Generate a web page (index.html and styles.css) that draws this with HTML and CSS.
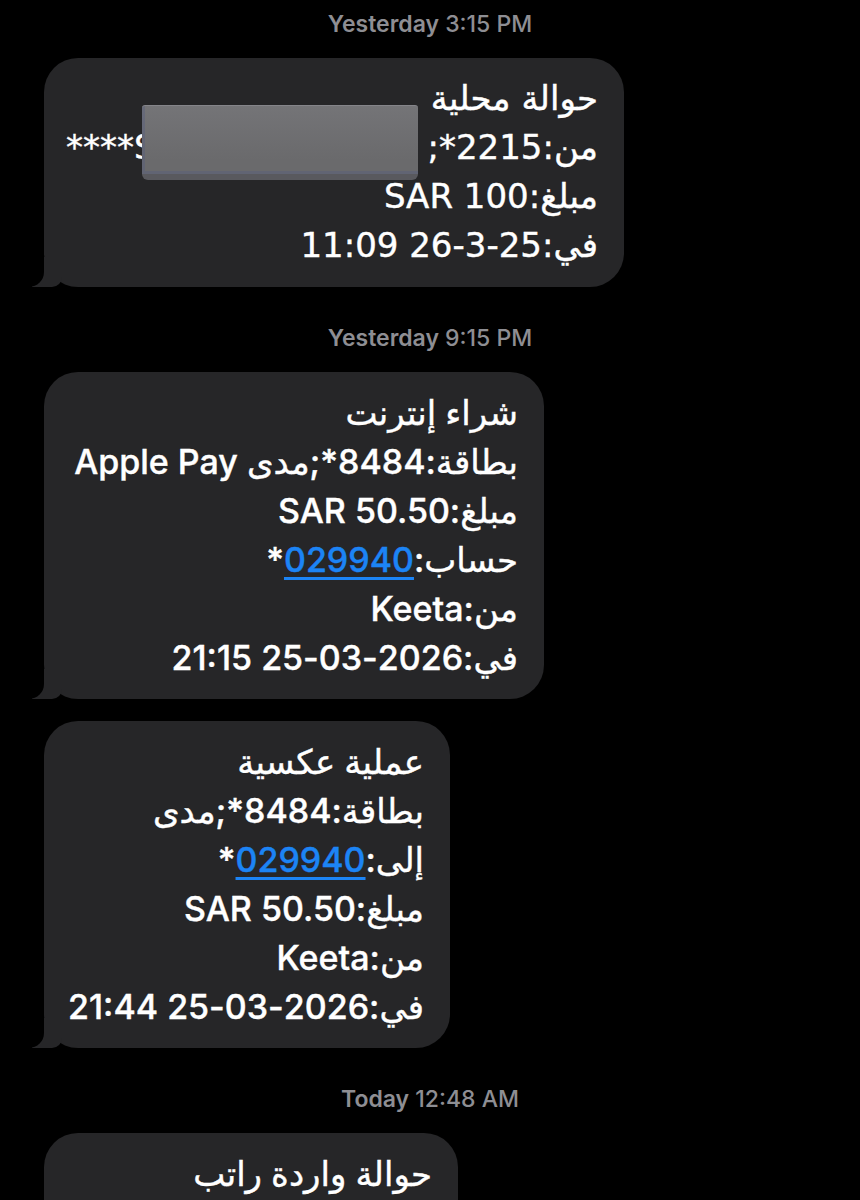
FILE: index.html
```html
<!DOCTYPE html>
<html lang="ar">
<head>
    <meta charset="UTF-8">
    <meta name="viewport" content="width=device-width, initial-scale=1.0">
    <title>Messages</title>
    <link rel="stylesheet" href="styles.css">
</head>
<body>
    <main class="thread">
        <div class="stamp" dir="ltr"><b>Yesterday</b> 3:15 PM</div>

        <!-- first sms: local transfer, sender name hidden -->
        <div class="bubble bubble-local" dir="rtl">
            <div class="line">حوالة محلية</div>
            <div class="line line-split">
                <span>من:2215*; U</span>
                <span>S****</span>
            </div>
            <div class="line">مبلغ:SAR 100</div>
            <div class="line">في:25-3-26 11:09</div>
            <div class="redact"></div>
        </div>

        <div class="stamp" dir="ltr"><b>Yesterday</b> 9:15 PM</div>

        <div class="bubble bubble-purchase" dir="rtl">
            <div class="line">شراء إنترنت</div>
            <div class="line">بطاقة:8484*;مدى Apple Pay</div>
            <div class="line">مبلغ:SAR 50.50</div>
            <div class="line">حساب:<a href="#">029940</a>*</div>
            <div class="line">من:Keeta</div>
            <div class="line">في:2026-03-25 21:15</div>
        </div>

        <div class="bubble bubble-refund" dir="rtl">
            <div class="line">عملية عكسية</div>
            <div class="line">بطاقة:8484*;مدى</div>
            <div class="line">إلى:<a href="#">029940</a>*</div>
            <div class="line">مبلغ:SAR 50.50</div>
            <div class="line">من:Keeta</div>
            <div class="line">في:2026-03-25 21:44</div>
        </div>

        <div class="stamp" dir="ltr"><b>Today</b> 12:48 AM</div>

        <div class="bubble bubble-salary" dir="rtl">
            <div class="line">حوالة واردة راتب</div>
            <div class="line">عبر:SARIE</div>
            <div class="line">مبلغ:SAR 8,500</div>
            <div class="line">في:2026-03-26 00:48</div>
        </div>
    </main>
</body>
</html>
```

FILE: styles.css
```css
body {
    margin: 0;
    background-color: #000;
    font-family: Inter, "DejaVu Sans", sans-serif;
    overflow: hidden;
}

.thread {
    display: flex;
    flex-direction: column;
    align-items: flex-start;
    padding: 10px 0 40px;
}

.stamp {
    align-self: stretch;
    text-align: center;
    font-size: 23px;
    line-height: 28px;
    font-weight: 500;
    color: #8e8e93;
    margin-bottom: 20px;
}

.stamp b {
    font-weight: 600;
}

.bubble + .stamp {
    margin-top: 37px;
}

.bubble {
    position: relative;
    box-sizing: border-box;
    margin-left: 44px;
    padding: 16px 26px 17px 22px;
    background-color: #262628;
    border-radius: 34px;
    color: #fff;
    font-size: 34px;
    font-weight: 500;
    line-height: 49px;
    white-space: nowrap;
    text-align: right;
    -webkit-text-stroke: 0.4px #fff;
}

.bubble + .bubble {
    margin-top: 22px;
}

/* tail */
.bubble::before {
    content: "";
    position: absolute;
    left: -12px;
    bottom: 0;
    width: 30px;
    height: 30px;
    background-color: #262628;
    border-bottom-right-radius: 10px;
}

.bubble::after {
    content: "";
    position: absolute;
    left: -26px;
    bottom: 0;
    width: 26px;
    height: 30px;
    background-color: #000;
    border-bottom-right-radius: 15px;
}

.bubble a {
    color: #1c84f5;
    -webkit-text-stroke: 0.4px #1c84f5;
    text-decoration: underline;
    text-decoration-thickness: 3px;
    text-underline-offset: 5px;
}

.line-split {
    display: flex;
    justify-content: space-between;
}

.bubble-local {
    width: 580px;
    font-family: "Liberation Sans Narrow", "DejaVu Sans", sans-serif;
}

.bubble-purchase {
    width: 500px;
}

.bubble-refund {
    width: 406px;
}

.bubble-salary {
    width: 414px;
}

.redact {
    position: absolute;
    left: 98px;
    top: 47px;
    width: 276px;
    height: 75px;
    box-sizing: border-box;
    background: linear-gradient(#747477, #6a6a6c 80%);
    border-top: 1px solid #85858a;
    border-bottom: 6px solid #59595e;
    border-radius: 3px 3px 6px 6px;
    box-shadow: inset 6px -6px 0 -3px rgba(80, 88, 130, 0.35);
}
```
